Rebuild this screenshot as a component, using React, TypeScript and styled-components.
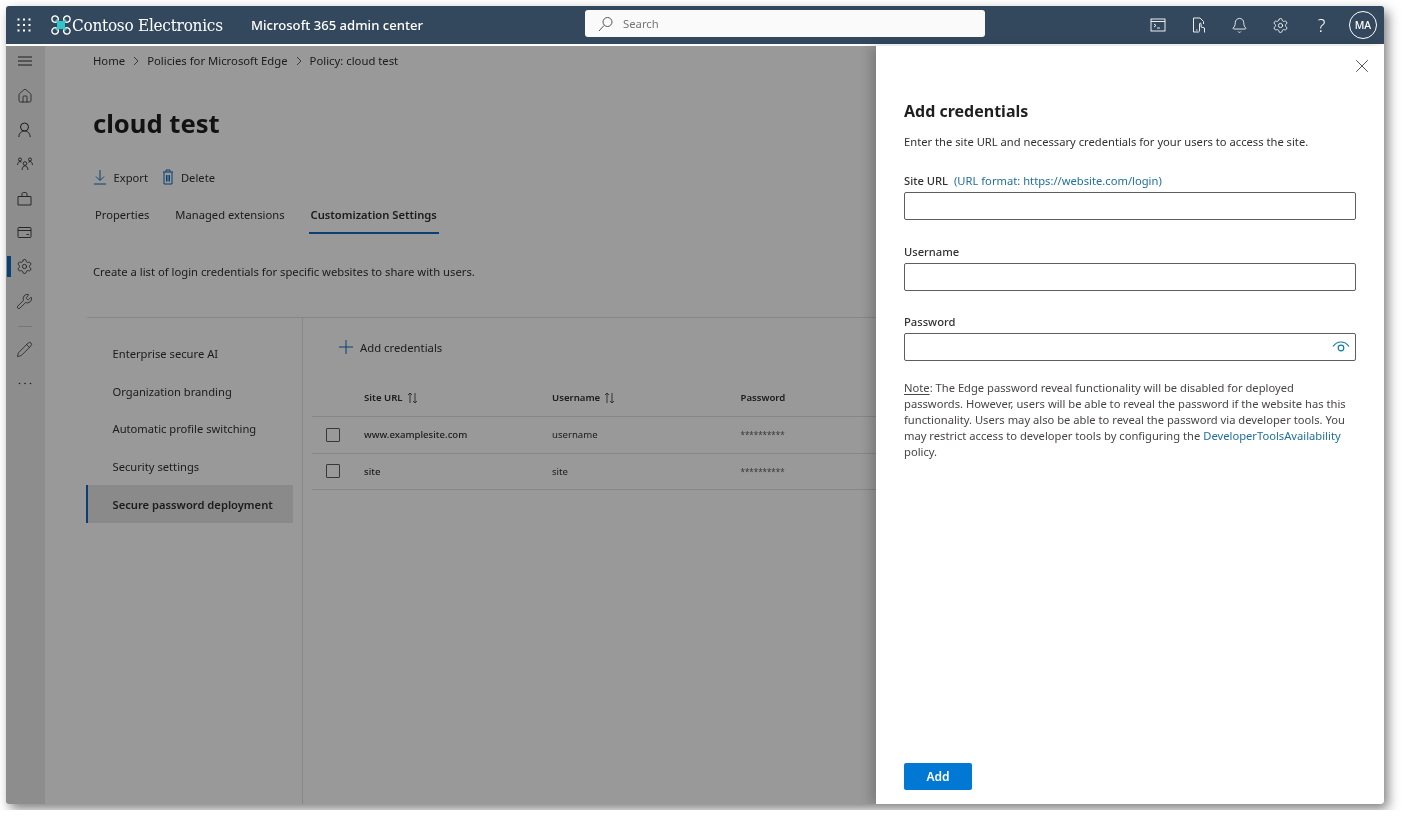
import React from 'react';
import styled, { createGlobalStyle } from 'styled-components';
import { Bell, Home, Pencil, Settings, Wrench, X } from 'lucide-react';

const FONT = '"Noto Sans", "Open Sans", sans-serif';

const GlobalStyle = createGlobalStyle`
  html, body {
    margin: 0;
    background: #fff;
    font-family: ${FONT};
    color: #323130;
  }
  * {
    box-sizing: border-box;
  }
`;

const FrameShadow = styled.div`
  width: 1384px;
  height: 804px;
  filter: drop-shadow(4px 5px 6px rgba(0, 0, 0, 0.5));
`;

const Frame = styled.div`
  margin: 6px 0 0 6px;
  width: 1378px;
  height: 798px;
  display: flex;
  flex-direction: column;
  border-radius: 3px;
  overflow: hidden;
`;

const Header = styled.header`
  height: 38px;
  flex: none;
  background: #33485d;
  color: #fff;
  display: flex;
  align-items: center;
  position: relative;
`;

const Waffle = styled.div`
  width: 36px;
  display: flex;
  justify-content: center;
`;

const Logo = styled.div`
  display: flex;
  align-items: center;
  margin-left: 9px;
  gap: 1px;
  width: 200px;
`;

const LogoText = styled.span`
  font-family: "DejaVu Serif Condensed", "DejaVu Serif", serif;
  font-size: 17px;
  letter-spacing: -0.25px;
  white-space: nowrap;
`;

const AppName = styled.span`
  font-size: 13.1px;
  font-weight: 500;
  white-space: nowrap;
`;

const SearchBox = styled.div`
  position: absolute;
  left: 579px;
  top: 4px;
  width: 400px;
  height: 27px;
  background: #fafafa;
  border-radius: 3px;
  display: flex;
  align-items: center;
  gap: 9px;
  padding: 0 0 0 13px;
  color: #767676;
  font-size: 11.3px;
`;

const HeaderActions = styled.div`
  margin-left: auto;
  display: flex;
  align-items: center;
  padding-right: 7px;
`;

const HeaderIcon = styled.div`
  width: 41px;
  height: 38px;
  display: flex;
  align-items: center;
  justify-content: center;
  font-size: 18px;
  font-weight: 300;
`;

const Avatar = styled.div`
  width: 28px;
  height: 28px;
  margin-left: 7px;
  border: 1px solid #fff;
  border-radius: 50%;
  display: flex;
  align-items: center;
  justify-content: center;
  font-size: 10.5px;
  font-weight: 500;
`;

const HeaderGap = styled.div`
  height: 2px;
  flex: none;
  background: #fff;
`;

const Body = styled.div`
  flex: 1;
  min-height: 0;
  display: flex;
  position: relative;
`;

const Dim = styled.div`
  position: absolute;
  inset: 0;
  background: rgba(0, 0, 0, 0.4);
  z-index: 1;
`;

const Rail = styled.nav`
  width: 39px;
  flex: none;
  background: #ebebeb;
  display: flex;
  flex-direction: column;
  align-items: center;
  padding-right: 2px;
`;

const RailItem = styled.div<{ $active?: boolean; $menu?: boolean }>`
  width: 100%;
  height: ${(p) => (p.$menu ? '30px' : '34.2px')};
  flex: none;
  display: flex;
  align-items: center;
  justify-content: center;
  position: relative;
  color: #323130;
  margin-bottom: ${(p) => (p.$menu ? '2.8px' : '0')};
  ${(p) =>
    p.$active
      ? `&::before {
    content: '';
    position: absolute;
    left: 1px;
    top: 6px;
    width: 4px;
    height: 21px;
    background: #0f6cbd;
  }`
      : ''}
`;

const RailSep = styled.div`
  width: 14px;
  height: 1px;
  background: #c8c6c4;
  margin: 8px 0 5px;
`;

const Main = styled.main`
  flex: 1;
  min-width: 0;
  background: #fff;
  display: flex;
  flex-direction: column;
  overflow: hidden;
`;

const Breadcrumb = styled.div`
  height: 29px;
  margin-left: 48px;
  display: flex;
  align-items: center;
  gap: 7px;
  font-size: 11.3px;
  flex: none;
`;

const Title = styled.h1`
  margin: 31px 0 0 48px;
  font-size: 25.6px;
  line-height: 36px;
  font-weight: 700;
  color: #201f1e;
`;

const Commands = styled.div`
  margin: 23px 0 0 47.5px;
  height: 24px;
  display: flex;
  align-items: center;
  font-size: 11.2px;
`;

const Command = styled.div`
  display: flex;
  align-items: center;
  gap: 7px;
  margin-right: 14px;
`;

const Tabs = styled.div`
  margin: 9px 0 0 48px;
  display: flex;
  gap: 22px;
  font-size: 11.2px;
`;

const Tab = styled.div<{ $active?: boolean }>`
  height: 36px;
  padding: 0 2px 1px;
  display: flex;
  align-items: center;
  white-space: nowrap;
  font-weight: ${(p) => (p.$active ? 600 : 400)};
  border-bottom: 2px solid ${(p) => (p.$active ? '#0f6cbd' : 'transparent')};
`;

const Description = styled.p`
  margin: 30px 0 0 48px;
  font-size: 11.25px;
  line-height: 16px;
`;

const Split = styled.div`
  margin: 37px 0 0 42px;
  flex: 1;
  min-height: 0;
  display: flex;
  border-top: 1px solid #e1dfdd;
`;

const SideNav = styled.div`
  width: 216px;
  flex: none;
  padding-top: 16.6px;
  border-right: 1px solid #e1dfdd;
`;

const SideItem = styled.div<{ $active?: boolean }>`
  width: 207px;
  margin-left: -1px;
  height: 37.7px;
  display: flex;
  align-items: center;
  padding-left: ${(p) => (p.$active ? '24.5px' : '26.5px')};
  font-size: 11.2px;
  white-space: nowrap;
  ${(p) =>
    p.$active
      ? `font-weight: 600;
  background: #e6e6e6;
  border-left: 2px solid #0f6cbd;`
      : ''}
`;

const Content = styled.div`
  flex: 1;
  min-width: 0;
  padding: 17px 0 0 9px;
`;

const AddLink = styled.div`
  margin-left: 27px;
  height: 24px;
  display: flex;
  align-items: center;
  gap: 7px;
  font-size: 11.3px;
`;

const TableGrid = styled.div`
  margin-top: 20.5px;
`;

const Row = styled.div<{ $head?: boolean }>`
  display: grid;
  grid-template-columns: 52px 188px 188.5px 1fr;
  align-items: center;
  height: ${(p) => (p.$head ? '37.6px' : '36.5px')};
  border-bottom: 1px solid #e1dfdd;
  font-size: 9.6px;
  font-weight: ${(p) => (p.$head ? 600 : 400)};
`;

const CheckCell = styled.div`
  padding-left: 14px;
`;

const Check = styled.div`
  width: 14px;
  height: 14px;
  border: 1px solid #605e5c;
  border-radius: 1px;
`;

const HeadCell = styled.div`
  display: flex;
  align-items: center;
  gap: 4px;
`;

const UrlCell = styled.div`
  font-weight: 500;
`;

const Masked = styled.div`
  font-size: 8px;
  color: #605e5c;
`;

const Panel = styled.aside`
  width: 508px;
  flex: none;
  background: #fff;
  position: relative;
  z-index: 2;
  padding: 0 28px 14px;
  display: flex;
  flex-direction: column;
  box-shadow: -6px 0 10px rgba(0, 0, 0, 0.18);
`;

const Close = styled.div`
  position: absolute;
  top: 9px;
  right: 11px;
  color: #323130;
  display: flex;
`;

const PanelTitle = styled.h2`
  margin: 52px 0 0;
  font-size: 16px;
  line-height: 26px;
  font-weight: 700;
  color: #201f1e;
`;

const PanelText = styled.p`
  margin: 10px 0 0;
  font-size: 11.2px;
  line-height: 16px;
`;

const Fields = styled.div`
  margin-top: 23px;
  display: flex;
  flex-direction: column;
  gap: 23.6px;
`;

const Label = styled.label`
  display: block;
  height: 16px;
  line-height: 16px;
  font-size: 11.2px;
  font-weight: 500;
  margin-bottom: 3px;
`;

const Hint = styled.span`
  margin-left: 3px;
  color: #1f6f9c;
  font-weight: 400;
`;

const InputBox = styled.div`
  height: 28px;
  border: 1px solid #605e5c;
  border-radius: 2px;
  display: flex;
  align-items: center;
  justify-content: flex-end;
  padding-right: 5px;
`;

const Note = styled.p`
  margin: 19px 6px 0 0;
  font-size: 11.2px;
  line-height: 16px;
  color: #484644;
  u {
    text-underline-offset: 2px;
  }
`;

const NoteLink = styled.span`
  color: #1f6f9c;
`;

const AddButton = styled.button`
  margin-top: auto;
  width: 68px;
  height: 27px;
  border: none;
  border-radius: 2px;
  background: #0078d4;
  color: #fff;
  font-family: ${FONT};
  font-size: 12px;
  font-weight: 600;
`;

const Chevron = () => (
  <svg width="8" height="10" viewBox="0 0 8 10" fill="none" stroke="#605e5c">
    <path d="M2 1l4 4-4 4" />
  </svg>
);

const SortIcon = () => (
  <svg width="11" height="12" viewBox="0 0 11 12" fill="none" stroke="#484644" strokeWidth="0.9">
    <path d="M3 11V1M1 3l2-2 2 2M8 1v10M6 9l2 2 2-2" />
  </svg>
);

const WaffleIcon = () => (
  <svg width="14" height="14" viewBox="0 0 14 14" fill="#fff">
    {[1.5, 7, 12.5].flatMap((y) =>
      [1.5, 7, 12.5].map((x) => <rect key={`${x}-${y}`} x={x - 1} y={y - 1} width="2" height="2" />),
    )}
  </svg>
);

const LogoIcon = () => (
  <svg width="20" height="20" viewBox="0 0 20 20" fill="none">
    <rect x="6" y="6" width="8" height="8" fill="#35c3c9" />
    <path d="M5 5l10 10M15 5L5 15" stroke="#35c3c9" strokeWidth="2.5" />
    <g stroke="#fff" strokeWidth="1.4">
      <path d="M7 5.5A3.2 3.2 0 1 0 5.5 7" />
      <path d="M13 5.5A3.2 3.2 0 1 1 14.5 7" />
      <path d="M7 14.5A3.2 3.2 0 1 1 5.5 13" />
      <path d="M13 14.5A3.2 3.2 0 1 0 14.5 13" />
    </g>
  </svg>
);

const SearchIcon = () => (
  <svg width="16" height="16" viewBox="0 0 16 16" fill="none" stroke="#555" strokeWidth="1">
    <circle cx="9.5" cy="6" r="4.5" />
    <path d="M6 9.5L1 15" />
  </svg>
);

const ConsoleIcon = () => (
  <svg width="16" height="14" viewBox="0 0 16 14" fill="none" stroke="#fff" strokeWidth="0.9">
    <rect x="1" y="1" width="14" height="12" />
    <path d="M1 3.5h14M4 6l2 1.5L4 9M7 10h3" />
  </svg>
);

const DeviceIcon = () => (
  <svg width="14" height="17" viewBox="0 0 14 17" fill="none" stroke="#fff" strokeWidth="0.9">
    <path d="M8 1H1.5v14H7" />
    <path d="M8 1l3.5 3.5V7" />
    <path d="M7.5 14.5V7c0-1.2 1.6-1.2 1.6 0v3l3.4 1V15.5" />
    <path d="M4 13h1.5" />
  </svg>
);

const DownloadIcon = () => (
  <svg width="14" height="16" viewBox="0 0 14 16" fill="none" stroke="#0f6cbd" strokeWidth="1">
    <path d="M7 1v10M3 7.5L7 11.5l4-4M1 15h12" />
  </svg>
);

const TrashIcon = () => (
  <svg width="12" height="16" viewBox="0 0 12 16" fill="none" stroke="#0f6cbd" strokeWidth="1">
    <path d="M1 3h10M4 3V1h4v2M2 3v12h8V3M4.5 6v6.5M6 6v6.5M7.5 6v6.5" />
  </svg>
);

const PlusIcon = () => (
  <svg width="14" height="14" viewBox="0 0 14 14" fill="none" stroke="#0f6cbd" strokeWidth="1">
    <path d="M7 0v14M0 7h14" />
  </svg>
);

const EyeIcon = () => (
  <svg width="18" height="14" viewBox="0 0 18 14" fill="none" stroke="#0f7c9c" strokeWidth="1.2">
    <path d="M1 6.5C3 3.5 5.8 2 9 2s6 1.5 8 4.5" />
    <circle cx="9" cy="8" r="2.8" />
  </svg>
);

const MenuIcon = () => (
  <svg width="14" height="10" viewBox="0 0 14 10" fill="none" stroke="#323130" strokeWidth="1">
    <path d="M0 1h14M0 5h14M0 9h14" />
  </svg>
);

const PersonIcon = () => (
  <svg width="13" height="16" viewBox="0 0 13 16" fill="none" stroke="#323130" strokeWidth="1">
    <circle cx="6.5" cy="5" r="4" />
    <path d="M0.8 15c.2-3.6 2.4-6 5.700-6s5.500 2.400 5.700 6" />
  </svg>
);

const GroupIcon = () => (
  <svg width="16" height="14" viewBox="0 0 16 14" fill="none" stroke="#323130" strokeWidth="0.9">
    <circle cx="8" cy="6.5" r="1.8" />
    <path d="M5 13c.4-2.5 1.3-4.2 3-4.2s2.6 1.7 3 4.2" />
    <circle cx="3" cy="2.5" r="1.5" />
    <circle cx="13" cy="2.5" r="1.5" />
    <path d="M0.5 8c.2-2 1-3.5 2.5-3.5 .7 0 1.2.3 1.7.9M15.5 8c-.2-2-1-3.5-2.5-3.5-.7 0-1.2.3-1.7.9" />
  </svg>
);

const BagIcon = () => (
  <svg width="15" height="15" viewBox="0 0 15 15" fill="none" stroke="#323130" strokeWidth="0.9">
    <path d="M1 5.5h13v8.5H1zM5 5.5V3c0-1 .6-1.500 1.500-1.500h2C9.400 1.500 10 2 10 3v2.500" />
  </svg>
);

const CardIcon = () => (
  <svg width="15" height="13" viewBox="0 0 15 13" fill="none" stroke="#323130" strokeWidth="0.9">
    <rect x="1" y="1.5" width="13" height="10" rx="1" />
    <path d="M1 4.5h13M9.5 8.5h2.5" />
  </svg>
);

const DotsIcon = () => (
  <svg width="14" height="3" viewBox="0 0 14 3" fill="#323130">
    <circle cx="1.5" cy="1.5" r="0.8" />
    <circle cx="7" cy="1.5" r="0.8" />
    <circle cx="12.5" cy="1.5" r="0.8" />
  </svg>
);

const sections = [
  'Enterprise secure AI',
  'Organization branding',
  'Automatic profile switching',
  'Security settings',
  'Secure password deployment',
];

const rows = [
  { url: 'www.examplesite.com', user: 'username' },
  { url: 'site', user: 'site' },
];

export default function App() {
  return (
    <>
      <GlobalStyle />
      <FrameShadow>
        <Frame>
          <Header>
            <Waffle>
              <WaffleIcon />
            </Waffle>
            <Logo>
              <LogoIcon />
              <LogoText>Contoso Electronics</LogoText>
            </Logo>
            <AppName>Microsoft 365 admin center</AppName>
            <SearchBox>
              <SearchIcon />
              Search
            </SearchBox>
            <HeaderActions>
              <HeaderIcon>
                <ConsoleIcon />
              </HeaderIcon>
              <HeaderIcon>
                <DeviceIcon />
              </HeaderIcon>
              <HeaderIcon>
                <Bell size={17} strokeWidth={1.2} />
              </HeaderIcon>
              <HeaderIcon>
                <Settings size={17} strokeWidth={1.2} />
              </HeaderIcon>
              <HeaderIcon>?</HeaderIcon>
              <Avatar>MA</Avatar>
            </HeaderActions>
          </Header>
          <HeaderGap />
          <Body>
            <Dim />
            <Rail>
              <RailItem $menu>
                <MenuIcon />
              </RailItem>
              <RailItem>
                <Home size={16} strokeWidth={1.2} />
              </RailItem>
              <RailItem>
                <PersonIcon />
              </RailItem>
              <RailItem>
                <GroupIcon />
              </RailItem>
              <RailItem>
                <BagIcon />
              </RailItem>
              <RailItem>
                <CardIcon />
              </RailItem>
              <RailItem $active>
                <Settings size={17} strokeWidth={1.2} />
              </RailItem>
              <RailItem>
                <Wrench size={17} strokeWidth={1.1} />
              </RailItem>
              <RailSep />
              <RailItem>
                <Pencil size={17} strokeWidth={1.1} />
              </RailItem>
              <RailItem>
                <DotsIcon />
              </RailItem>
            </Rail>
            <Main>
              <Breadcrumb>
                Home
                <Chevron />
                Policies for Microsoft Edge
                <Chevron />
                Policy: cloud test
              </Breadcrumb>
              <Title>cloud test</Title>
              <Commands>
                <Command>
                  <DownloadIcon />
                  Export
                </Command>
                <Command>
                  <TrashIcon />
                  Delete
                </Command>
              </Commands>
              <Tabs>
                <Tab>Properties</Tab>
                <Tab>Managed extensions</Tab>
                <Tab $active>Customization Settings</Tab>
              </Tabs>
              <Description>Create a list of login credentials for specific websites to share with users.</Description>
              <Split>
                <SideNav>
                  {sections.map((s, i) => (
                    <SideItem key={s} $active={i === sections.length - 1}>
                      {s}
                    </SideItem>
                  ))}
                </SideNav>
                <Content>
                  <AddLink>
                    <PlusIcon />
                    Add credentials
                  </AddLink>
                  <TableGrid>
                    <Row $head>
                      <div />
                      <HeadCell>
                        Site URL <SortIcon />
                      </HeadCell>
                      <HeadCell>
                        Username <SortIcon />
                      </HeadCell>
                      <HeadCell>Password</HeadCell>
                    </Row>
                    {rows.map((r) => (
                      <Row key={r.url}>
                        <CheckCell>
                          <Check />
                        </CheckCell>
                        <UrlCell>{r.url}</UrlCell>
                        <div>{r.user}</div>
                        <Masked>**********</Masked>
                      </Row>
                    ))}
                  </TableGrid>
                </Content>
              </Split>
            </Main>
            <Panel>
              <Close>
                <X size={22} strokeWidth={0.9} />
              </Close>
              <PanelTitle>Add credentials</PanelTitle>
              <PanelText>Enter the site URL and necessary credentials for your users to access the site.</PanelText>
              <Fields>
                <div>
                  <Label>
                    Site URL<Hint> (URL format: https://website.com/login)</Hint>
                  </Label>
                  <InputBox />
                </div>
                <div>
                  <Label>Username</Label>
                  <InputBox />
                </div>
                <div>
                  <Label>Password</Label>
                  <InputBox>
                    <EyeIcon />
                  </InputBox>
                </div>
              </Fields>
              <Note>
                <u>Note</u>: The Edge password reveal functionality will be disabled for deployed passwords. However,
                users will be able to reveal the password if the website has this functionality. Users may also be able
                to reveal the password via developer tools. You may restrict access to developer tools by configuring
                the <NoteLink>DeveloperToolsAvailability</NoteLink> policy.
              </Note>
              <AddButton>Add</AddButton>
            </Panel>
          </Body>
        </Frame>
      </FrameShadow>
    </>
  );
}
